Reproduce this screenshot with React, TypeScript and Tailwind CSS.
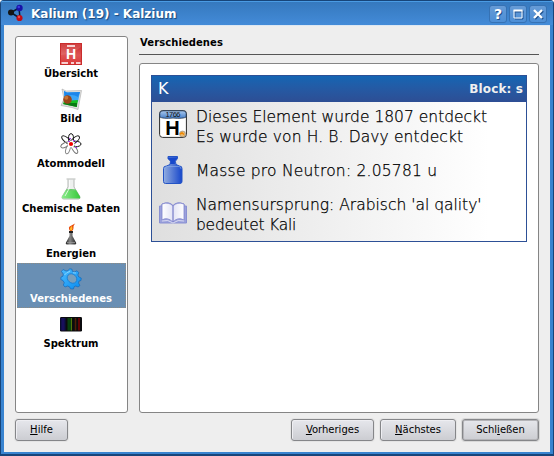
import React from "react";

const BOLD = "font-['DejaVu_Sans',sans-serif] font-bold";

function MoleculeIcon() {
  return (
    <svg width="18" height="18" viewBox="0 0 18 18">
      <path d="M4 8.500 12 4M4 8.500 12.500 14M12 4 13 14" stroke="#0a1a30" strokeWidth="1.500" />
      <circle cx="4" cy="8.500" r="3" fill="#151515" />
      <circle cx="12.500" cy="4" r="3.200" fill="#1712a8" />
      <circle cx="11.800" cy="3" r="1.300" fill="#3b3bdc" />
      <circle cx="12.500" cy="14" r="3.100" fill="#c00d18" />
      <circle cx="12" cy="13" r="1.200" fill="#f04848" />
    </svg>
  );
}

function OverviewIcon() {
  return (
    <svg width="22" height="22" viewBox="0 0 22 22">
      <defs>
        <linearGradient id="red" x1="0" y1="0" x2="0" y2="1">
          <stop offset="0" stopColor="#ca2424" />
          <stop offset=".55" stopColor="#dd5555" />
          <stop offset="1" stopColor="#dc3838" />
        </linearGradient>
      </defs>
      <rect x=".5" y=".5" width="21" height="21" fill="url(#red)" stroke="#c92c2c" />
      <path d="M1 12Q13 11 21 4V1H1Z" fill="#fff" opacity=".12" />
      <path d="M7 3H15M1.500 20H8M11 20H14M16 20H20.500" stroke="#fff" strokeWidth="1.400" />
      <text x="11" y="16" textAnchor="middle" fontSize="14" fontWeight="bold" fill="#fff" fontFamily="Liberation Sans, sans-serif">H</text>
    </svg>
  );
}

function PictureIcon() {
  return (
    <svg width="22" height="22" viewBox="0 0 22 22">
      <path d="M2 1 6 3 21.500 2.500 18 21.500 12 19.500 1 17.500 4 11Z" fill="#e1e1df" stroke="#aaa" strokeWidth=".6" />
      <path d="M4 3 7 4.500 20 4 18 14 4 13Z" fill="#39a6f8" />
      <path d="M4 3 7 4.500 20 4 18 9Q12 5 5 9Z" fill="#1d86ea" />
      <path d="M4 13 18 12 16.800 19 3 16Z" fill="#16bf20" />
      <path d="M5 15 17 15 16.800 19 3 16Z" fill="#087a13" />
      <circle cx="7.500" cy="11.500" r="4.300" fill="#9b4618" />
      <circle cx="6.300" cy="9.800" r="2" fill="#c87332" />
    </svg>
  );
}

function AtomIcon() {
  return (
    <svg width="22" height="22" viewBox="0 0 22 22" fill="none">
      <g strokeWidth="1">
        <ellipse cx="15.500" cy="11" rx="5.500" ry="2.800" stroke="#111" />
        <ellipse cx="11" cy="5.500" rx="2.500" ry="4.800" stroke="#111" />
        <ellipse cx="15" cy="7" rx="2.400" ry="5.500" transform="rotate(48 15 7)" stroke="#222" />
        <ellipse cx="6.500" cy="7" rx="2.400" ry="5.800" transform="rotate(-50 6.500 7)" stroke="#222" />
        <ellipse cx="5" cy="12" rx="4.500" ry="2.200" transform="rotate(-25 5 12)" stroke="#777" />
        <ellipse cx="8" cy="16" rx="2" ry="5" transform="rotate(18 8 16)" stroke="#888" />
        <ellipse cx="14.500" cy="16" rx="2" ry="5" transform="rotate(-32 14.500 16)" stroke="#777" />
      </g>
      <circle cx="11" cy="11" r="3.500" fill="#fff" />
      <circle cx="11" cy="11" r="2.100" fill="#f00000" />
      <path d="M9 5h2v1H9zM13 7h2v1h-2zM16 9h1v1h-1zM15 14h2v1h-2zM8 8h2v1H8z" fill="#a33af0" />
    </svg>
  );
}

function FlaskIcon() {
  return (
    <svg width="22" height="22" viewBox="0 0 22 22">
      <defs>
        <linearGradient id="liquid">
          <stop stopColor="#8beb8b" />
          <stop offset="1" stopColor="#37c83b" />
        </linearGradient>
      </defs>
      <path d="M6.500 1H15.500M8 1.500V9L2.500 18Q1 21 4 21H18.500Q21 21 19.500 18L14 9V1.500" fill="#eef0ef" stroke="#b4b8b5" />
      <path d="M6 12H16L20 18.500Q21 20.500 18 20.500H4Q1 20.500 2 18.500Z" fill="url(#liquid)" />
      <ellipse cx="11" cy="12" rx="5" ry="1" fill="#67cd68" />
      <path d="M9.500 2V10L5 18" stroke="#fff" opacity=".75" fill="none" />
    </svg>
  );
}

function BurnerIcon() {
  return (
    <svg width="22" height="22" viewBox="0 0 22 22">
      <defs>
        <linearGradient id="lamp">
          <stop stopColor="#222" />
          <stop offset=".4" stopColor="#888" />
          <stop offset="1" stopColor="#252525" />
        </linearGradient>
      </defs>
      <path d="M9.500 9V13L6 19.500Q5 21.500 8 21.500H14Q17 21.500 16 19.500L12.500 13V9Z" fill="url(#lamp)" />
      <path d="M9 9H13" stroke="#222" strokeWidth="2" />
      <path d="M10 8Q7.500 4 10.500 3L15 .5Q13 3 13.500 5 13.500 7 12 8Z" fill="#e84c0b" />
      <path d="M10.500 7.500Q9 5 12 3Q13 6 11.500 7.500Z" fill="#ffba27" />
      <path d="M7 19.500H15" stroke="#999" strokeWidth=".8" />
    </svg>
  );
}

function GearIcon() {
  return (
    <svg width="22" height="22" viewBox="0 0 22 22">
      <defs>
        <linearGradient id="gear" x1="0" y1="0" x2="1" y2="1">
          <stop stopColor="#4dbcff" />
          <stop offset="1" stopColor="#078bef" />
        </linearGradient>
      </defs>
      <path fill="url(#gear)" stroke="#1269bc" strokeWidth=".7" strokeLinejoin="round" d="M3 1.500 6 3 8 2.800 9.500 .8 12 1.200 12.300 3.300 14.500 4 17 2.800 18.800 4.800 17.800 7 18.800 9 21.200 10 21 12.500 19 13 18.500 15 20 17.500 18 19 15.800 18 14 18.800 13.500 21 10.500 20.800 9.500 18.800 7.500 18 5 19 3.300 17 4.300 14.800 3 12.500 .8 11.500 1 9 3 8.200 3.300 6 1.500 3.500Z" />
      <ellipse cx="12" cy="10.500" rx="5.200" ry="4.300" transform="rotate(42 12 10.500)" fill="#789fbd" stroke="#167bd2" strokeWidth=".8" />
      <path d="M4.500 7 7 4.500 10 3.500M13 4.800 16 5" stroke="#9ae0ff" strokeWidth=".8" fill="none" />
    </svg>
  );
}

function SpectrumIcon() {
  return (
    <svg width="22" height="22" viewBox="0 0 22 22">
      <rect y="4" width="22" height="14.500" rx="1.300" fill="#0b0b0e" />
      <path d="M1.500 5v12.500M4.500 5v12.500" stroke="#10104b" strokeWidth="2" />
      <path d="M3 5v12.500" stroke="#26128a" />
      <path d="M8.500 5v12.500M10.500 5v12.500" stroke="#09420d" strokeWidth="2" />
      <path d="M11.500 5v12.500" stroke="#507409" />
      <path d="M15.500 5v12.500" stroke="#4c2106" strokeWidth="1.500" />
      <path d="M19 5v12.500" stroke="#5d0205" strokeWidth="2" />
    </svg>
  );
}

function DiscoveryIcon() {
  return (
    <svg width="28" height="28" viewBox="0 0 28 28">
      <defs>
        <linearGradient id="date" x1="0" y1="0" x2="0" y2="1">
          <stop stopColor="#a9c8ee" />
          <stop offset="1" stopColor="#477fc9" />
        </linearGradient>
      </defs>
      <rect x=".6" y=".6" width="26.800" height="26.800" rx="3" fill="#fff" stroke="#292929" />
      <path d="M.8 7V3.500Q.8.800 4 .8H24Q27.200.800 27.200 3.500V7Q24 9 14 8 4 9 .8 7Z" fill="url(#date)" stroke="#1e344f" strokeWidth=".8" />
      <text x="14" y="7" textAnchor="middle" fontFamily="Liberation Sans, sans-serif" fontSize="7.500" fill="#111" textLength="15">1766</text>
      <text x="13.500" y="24.500" textAnchor="middle" fontFamily="Liberation Sans, sans-serif" fontSize="20" fontWeight="bold" fill="#000">H</text>
      <circle cx="23.500" cy="24" r="3" fill="#e8bb75" stroke="#777" strokeWidth=".5" />
      <path d="M21 24 23 23 25 24.500" fill="none" stroke="#ef8600" strokeWidth="1.500" />
    </svg>
  );
}

function MassIcon() {
  return (
    <svg width="28" height="28" viewBox="0 0 28 28">
      <defs>
        <linearGradient id="mass">
          <stop stopColor="#91acdf" />
          <stop offset="1" stopColor="#1747cb" />
        </linearGradient>
      </defs>
      <path d="M9 .5H18.500V2.500Q15 5 17 8.500L20.500 10Q23 10 23 12.500V25.500Q23 27.500 21 27.500H6.500Q4.500 27.500 4.500 25.500V12.500Q4.500 10 7.500 10L11 8.500Q13 5 9 2.500Z" fill="url(#mass)" stroke="#2454c5" />
      <path d="M9 1.500H18V3Q15 5 16 8H11Q13 5 9 3Z" fill="#1748cb" />
      <path d="M5.500 25V13Q5.500 11 8 10.500H20Q22 10.500 22 13" fill="none" stroke="#8eb0e6" strokeWidth=".6" />
    </svg>
  );
}

function BookIcon() {
  return (
    <svg width="28" height="28" viewBox="0 0 28 28">
      <defs>
        <linearGradient id="page">
          <stop stopColor="#fff" />
          <stop offset=".5" stopColor="#e2e3f5" />
          <stop offset="1" stopColor="#fff" />
        </linearGradient>
      </defs>
      <path d="M.5 7H3V5Q10 2 14 6.500 18 2 25 5V7H27.500V24H.5Z" fill="#9ba1dc" stroke="#8990d2" />
      <path d="M3 5Q10 2.500 14 7V23Q8 17.500 3 21ZM14 7Q18 2.500 25 5V21Q19 17.500 14 23Z" fill="url(#page)" stroke="#7d83cc" strokeWidth=".8" />
      <path d="M3 22Q9 20 14 24 19 20 25 22" stroke="#e8e9f6" fill="none" strokeWidth=".8" />
    </svg>
  );
}

function ShadowGlyph({ children }: { children: React.ReactNode }) {
  return (
    <svg width="16" height="16" viewBox="0 0 16 16" fill="none">
      <g stroke="#1e518f" transform="translate(1 1)">{children}</g>
      <g stroke="#fff">{children}</g>
    </svg>
  );
}

const entries = [
  { label: "Übersicht", icon: <OverviewIcon /> },
  { label: "Bild", icon: <PictureIcon /> },
  { label: "Atommodell", icon: <AtomIcon /> },
  { label: "Chemische Daten", icon: <FlaskIcon /> },
  { label: "Energien", icon: <BurnerIcon /> },
  { label: "Verschiedenes", icon: <GearIcon />, selected: true },
  { label: "Spektrum", icon: <SpectrumIcon /> },
];

function DialogButton({ children, className }: { children: React.ReactNode; className: string }) {
  return (
    <button className={`h-[22px] rounded-[3px] border border-[#858689] bg-linear-to-b from-[#e6e7ec] to-[#cccdd2] text-[10px] leading-[20px] ${className}`}>
      {children}
    </button>
  );
}

const titleButton = "flex h-[18px] w-[18px] items-center justify-center rounded-[3px] border border-[#3672b4] bg-linear-to-b from-[#669bd6] to-[#4c8ed6]";

export default function App() {
  return (
    <div className="h-[456px] w-[554px] overflow-hidden rounded-t-[4px] border-x border-b-2 border-[#17457a] bg-[#3984d0] font-['DejaVu_Sans',sans-serif] text-black">
      <header className="flex h-[25px] items-center border-t border-[#17457a] bg-linear-to-b from-[#3578bd] to-[#438bd8] pt-[2px] pr-[6px] pl-[6px] shadow-[inset_0_1px_0_#4a9be4]">
        <div className="-mt-[2px]"><MoleculeIcon /></div>
        <h1 className={`ml-[6px] flex-1 text-[12px] leading-[20px] text-white [text-shadow:1px_1px_1px_#174679] ${BOLD}`}>Kalium (19) - Kalzium</h1>
        <div className="flex gap-[2px]">
          <button aria-label="Hilfe" className={titleButton}><span className="text-[14px] leading-4 font-bold text-white [text-shadow:1px_1px_0_#1e518f]">?</span></button>
          <button aria-label="Maximieren" className={titleButton}><ShadowGlyph><path d="M4 4.500H12V12H4Z" strokeWidth="1" /><path d="M3.500 4.500H12.500" strokeWidth="2" /></ShadowGlyph></button>
          <button aria-label="Schließen" className={titleButton}><ShadowGlyph><path d="M4 4 12 12M12 4 4 12" strokeWidth="2.300" /></ShadowGlyph></button>
        </div>
      </header>
      <div className="mx-[3px] flex h-[427px] flex-col border-t border-[#dce7f2] bg-[#eeeeee] px-[11px]">
        <main className="flex h-[387px] pt-[10px]">
          <nav className="h-[377px] w-[113px] shrink-0 rounded-[3px] border border-[#858585] bg-white px-px pt-px">
            {entries.map((entry) => (
              <div key={entry.label} className={`flex h-[45px] flex-col items-center border pt-[4px] ${entry.selected ? "border-dotted border-[#8d8b83] bg-[#698fb4] text-white" : "border-transparent"}`}>
                <div className="mr-px">{entry.icon}</div>
                <span className={`mt-[2px] mr-px text-[10px] leading-[14px] whitespace-nowrap ${BOLD}`}>{entry.label}</span>
              </div>
            ))}
          </nav>
          <section className="ml-[11px] flex w-[400px] flex-col">
            <h2 className={`h-[19px] border-b border-[#555] pl-px text-[10px] leading-[13px] tracking-[0.08px] ${BOLD}`}>Verschiedenes</h2>
            <div className="mt-[8px] h-[350px] rounded-[3px] border border-[#858585] bg-white pt-[11px] pl-[11px]">
              <article className="h-[167px] w-[376px] border border-[#2d5096] bg-linear-to-r from-[#dfdfdf] to-white to-90%">
                <header className="flex h-[26px] items-center justify-between bg-linear-to-b from-[#1365b3] to-[#2d4e94] pr-[3px] pl-[6px] text-white">
                  <span className="text-[16px] leading-5">K</span>
                  <span className={`text-[12px] leading-5 tracking-[0.12px] text-[#f0f0f0] ${BOLD}`}>Block: s</span>
                </header>
                <div className="flex flex-col pt-[5px] pl-[7px] font-['DejaVu_Sans_Light','DejaVu_Sans',sans-serif] text-[15.500px] leading-[20px] font-extralight [-webkit-text-stroke:0.25px_#000]">
                  <div className="flex h-[41px]"><div className="mt-[3px] mr-[9px] [-webkit-text-stroke:0]"><DiscoveryIcon /></div><p>Dieses Element wurde 1807 entdeckt<br /><span className="tracking-[0.12px]">Es wurde von H. B. Davy entdeckt</span></p></div>
                  <div className="flex h-[47px] items-center"><div className="mr-[9px] -mt-[4px]"><MassIcon /></div><p className="-mt-[2px] tracking-[0.22px]">Masse pro Neutron: 2.05781 u</p></div>
                  <div className="flex h-[42px]"><div className="mt-[4px] mr-[9px]"><BookIcon /></div><p>Namensursprung: Arabisch 'al qality'<br /><span className="tracking-[-0.24px]">bedeutet Kali</span></p></div>
                </div>
              </article>
            </div>
          </section>
        </main>
        <footer className="mt-[6px] flex">
          <DialogButton className="w-[53px] shadow-[inset_1px_1px_0_#eeeef2,0_0_0_1px_#e4e4e4]"><u>H</u>ilfe</DialogButton>
          <DialogButton className="mr-[6px] ml-auto w-[83px] shadow-[inset_1px_1px_0_#eeeef2,0_0_0_1px_#e4e4e4]"><u>V</u>orheriges</DialogButton>
          <DialogButton className="mr-[6px] w-[76px] shadow-[inset_1px_1px_0_#eeeef2,0_0_0_1px_#e4e4e4]"><u>N</u>ächstes</DialogButton>
          <DialogButton className="w-[77px] shadow-[inset_0_0_0_1px_#b4b4b8,0_0_0_1px_#d8d8d8]">Schl<u>i</u>eßen</DialogButton>
        </footer>
      </div>
    </div>
  );
}
